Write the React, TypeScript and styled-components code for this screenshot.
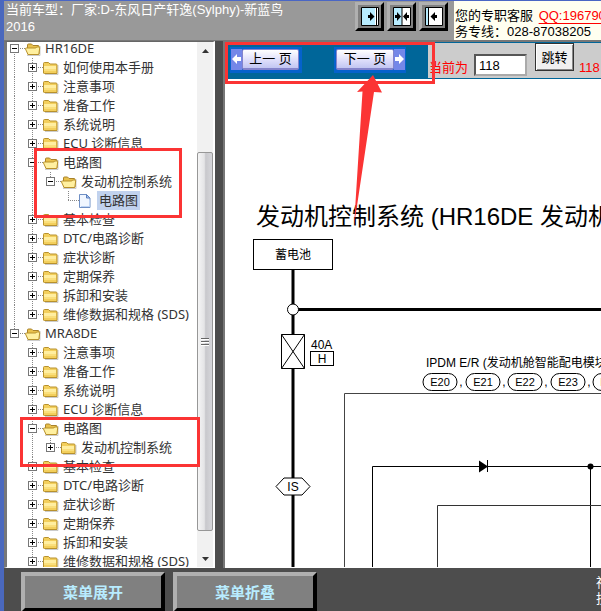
import React, { useState } from "react";
import styled, { createGlobalStyle, css } from "styled-components";

const GlobalStyle = createGlobalStyle`
  * { box-sizing: border-box; }
  body {
    margin: 0;
    overflow: hidden;
    font-family: "Liberation Sans", "Noto Sans CJK SC", sans-serif;
    font-size: 13px;
    line-height: 17px;
    color: #000;
  }
  button, input { font: inherit; padding: 0; margin: 0; }
  ul { list-style: none; margin: 0; padding: 0; }
`;

const Window = styled.div`
  position: relative;
  display: flex;
  flex-direction: column;
  height: 100vh;
  overflow: hidden;
  border-left: 4px solid #4a68bd;
  border-top: 1px solid #4a66c4;
  background: #4d4d4d;
`;

const Header = styled.header`
  display: flex;
  flex: 0 0 40px;
  padding-left: 2px;
  background: #999;
  border-bottom: 1px solid #777;
`;

const VehicleInfo = styled.p`
  flex: 0 0 280px;
  margin: 0;
  color: #fff;
`;

const LayoutButtons = styled.div`
  display: flex;
  flex: 1 0 auto;
  justify-content: flex-end;
  gap: 3px;
  padding: 1px 6px 0 0;
  min-width: 168px;
`;

const LayoutButton = styled.button`
  display: flex;
  align-items: center;
  justify-content: center;
  width: 29px;
  height: 29px;
  background: #808080;
  border: 3px solid;
  border-color: #b0b0b0 #000 #000 #b0b0b0;
`;

const Contact = styled.address`
  flex: 0 1 147px;
  min-width: 0;
  padding: 7px 0 0 1px;
  overflow: hidden;
  line-height: 16px;
  white-space: nowrap;
  font-style: normal;
  background: #fffff0;
`;

const QQLink = styled.a`
  margin-left: 2px;
  color: #f00;
  text-underline-offset: 3px;
`;

const Body = styled.div`
  display: flex;
  flex: 1 1 0;
  min-height: 0;
`;

const Sidebar = styled.nav`
  display: flex;
  flex: 0 0 211px;
  background: #fff;
  border: solid;
  border-width: 1px 2px 1px 3px;
  border-color: #666 #fff #fff #777;
`;

const TreeView = styled.div`
  flex: 1;
  min-width: 0;
  overflow: hidden;
  font-family: "Noto Sans", "Noto Sans CJK SC", sans-serif;
  color: #333;
`;

const TreeRoot = styled.ul`
  margin-top: -3px;
`;

const TreeRow = styled.div`
  display: flex;
  align-items: center;
  height: 19px;
  white-space: nowrap;
`;

const dots = "repeating-linear-gradient(to bottom, #888 0 1px, transparent 1px 2px)";
const dashes = "repeating-linear-gradient(to right, #888 0 1px, transparent 1px 2px)";

const Guide = styled.span<{ $line: boolean }>`
  flex: 0 0 18px;
  height: 19px;
  background: ${(p) => (p.$line ? dots : "none")} 7px 0 / 1px 100% no-repeat;
`;

const Joint = styled.span<{ $up: boolean; $down: boolean }>`
  display: flex;
  flex: 0 0 18px;
  align-items: center;
  height: 19px;
  padding-left: 3px;
  ${(p) => css`
    background:
      ${dashes} 7px 9px / 11px 1px no-repeat,
      ${p.$up ? dots : "none"} 7px 0 / 1px 9px no-repeat,
      ${p.$down ? dots : "none"} 7px 9px / 1px 10px no-repeat;
  `}
`;

const Expander = styled.button`
  width: 9px;
  height: 9px;
  border: 1px solid #777;
  background:
    linear-gradient(#000, #000) center / 5px 1px no-repeat,
    #fff;
  &[aria-expanded="false"] {
    background:
      linear-gradient(#000, #000) center / 5px 1px no-repeat,
      linear-gradient(#000, #000) center / 1px 5px no-repeat,
      #fff;
  }
`;

const TreeIcon = styled.svg`
  flex: 0 0 16px;
  height: 16px;
  margin-right: 3px;
`;

const TreeLabel = styled.span<{ $selected: boolean }>`
  padding: 0 1px;
  line-height: 19px;
  ${(p) => p.$selected && css`
    margin-left: -1px;
    padding: 0 2px;
    background: #c1d2ee;
  `}
`;

const Scrollbar = styled.div`
  display: flex;
  flex: 0 0 16px;
  flex-direction: column;
  background: #f1f1f1;
`;

const ScrollArrow = styled.button`
  display: flex;
  align-items: center;
  justify-content: center;
  height: 17px;
  border: 0;
  background: transparent;
`;

const Track = styled.div`
  display: grid;
  grid-template-rows: 93fr 379fr 19fr;
  flex: 1;
`;

const Thumb = styled.div`
  display: flex;
  flex-direction: column;
  align-items: center;
  justify-content: center;
  gap: 1px;
  grid-row: 2;
  border: 1px solid #979797;
  border-radius: 2px;
  background: linear-gradient(to right, #f5f5f5, #e4e4e6 45%, #c8c8cc 55%, #d6d6da);
`;

const Grip = styled.span`
  width: 8px;
  height: 2px;
  background: linear-gradient(#666 50%, #fff 50%);
`;

const Content = styled.main`
  display: flex;
  flex: 1;
  flex-direction: column;
  min-width: 0;
  margin-left: 8px;
  background: #fff;
  border-left: 2px solid #777;
  border-top: 1px solid #777;
`;

const Toolbar = styled.form`
  display: flex;
  flex: 0 0 37px;
  background: #ccc;
  border: solid #069;
  border-width: 1px 0;
`;

const Pager = styled.div`
  display: flex;
  flex: 0 0 203px;
  gap: 32px;
  padding: 4px 0 0 5px;
  background: #069;
`;

const PagerButton = styled.button<{ $next?: boolean }>`
  display: flex;
  flex: 0 0 72px;
  flex-direction: ${(p) => (p.$next ? "row-reverse" : "row")};
  height: 26px;
  padding: ${(p) => (p.$next ? "2px 1px 3px 2px" : "2px 3px 3px 1px")};
  border: 0;
  background: #0562cc;
`;

const PagerFace = styled.span`
  flex: 1;
  font-size: 13px;
  line-height: 18px;
  text-align: center;
  background: linear-gradient(#fff, #dcdcfa 60%, #c2c6f2);
  border: 1px solid #8484cc;
  border-width: 1px 1px 2px;
  border-radius: 2px;
`;

const PagerArrow = styled.svg`
  flex: 0 0 11px;
  height: 21px;
`;

const PageField = styled.div`
  display: flex;
  align-items: flex-start;
  flex: 1;
  min-width: 0;
  overflow: hidden;
  padding-left: 1px;
  color: #f00;
  white-space: nowrap;
`;

const PageLabel = styled.label`
  margin: 16px 6px 0 0;
`;

const PageInput = styled.input`
  flex: none;
  width: 53px;
  height: 22px;
  margin: 11px 8px 0 0;
  padding-left: 3px;
  border: 2px inset #aaa;
  background: #fff;
  color: #000;
`;

const JumpButton = styled.button`
  flex: 0 0 39px;
  height: 28px;
  margin-right: 5px;
  border: 1px solid #333;
  box-shadow: inset 1px 1px #fff, inset -1px -1px #888;
  background: #f0f0f0;
  color: #000;
`;

const PageTotal = styled.output`
  margin-top: 16px;
`;

const Sheet = styled.div`
  flex: 1;
  min-height: 0;
  overflow: hidden;
  border-bottom: 1px solid #fff;
`;

const Footer = styled.footer`
  display: flex;
  flex: 0 0 43px;
  gap: 8px;
  padding: 4px 0 0 17px;
  overflow: hidden;
`;

const MenuButton = styled.button`
  flex: 0 0 144px;
  height: 40px;
  border: 4px solid;
  border-color: #b0b0b0 #000 #000 #b0b0b0;
  background: #808080;
  color: #b8ecff;
  font-size: 15px;
  font-weight: 700;
`;

const Notice = styled.p`
  flex: 0 0 5px;
  margin: 3px 0 0 auto;
  overflow: hidden;
  color: #fff;
  line-height: 16px;
  white-space: nowrap;
`;

const Markup = styled.svg`
  position: absolute;
  left: -4px;
  top: -1px;
  pointer-events: none;
`;

type Node = { label: string; open?: boolean; leaf?: boolean; children?: Node[] };

const folder = (label: string): Node => ({ label, open: false });

const tree: Node[] = [
  {
    label: "HR16DE",
    open: true,
    children: [
      folder("如何使用本手册"),
      folder("注意事项"),
      folder("准备工作"),
      folder("系统说明"),
      folder("ECU 诊断信息"),
      {
        label: "电路图",
        open: true,
        children: [
          { label: "发动机控制系统", open: true, children: [{ label: "电路图", leaf: true }] },
        ],
      },
      folder("基本检查"),
      folder("DTC/电路诊断"),
      folder("症状诊断"),
      folder("定期保养"),
      folder("拆卸和安装"),
      folder("维修数据和规格 (SDS)"),
    ],
  },
  {
    label: "MRA8DE",
    open: true,
    children: [
      folder("注意事项"),
      folder("准备工作"),
      folder("系统说明"),
      folder("ECU 诊断信息"),
      { label: "电路图", open: true, children: [folder("发动机控制系统")] },
      folder("基本检查"),
      folder("DTC/电路诊断"),
      folder("症状诊断"),
      folder("定期保养"),
      folder("拆卸和安装"),
      folder("维修数据和规格 (SDS)"),
    ],
  },
];

function FolderIcon({ open }: { open: boolean }) {
  return (
    <TreeIcon width="16" height="16" viewBox="0 0 16 16" aria-hidden="true">
      <path d="M2 14.5h13V5" fill="none" stroke="#aaa" opacity=".6" />
      {open ? (
        <>
          <path d="M2.5 13V4q0-1 1-1h3l1.500 1.500H13q1 0 1 1V13z" fill="#e9c14c" stroke="#a9822a" />
          <path d="M3 13.500.5 8q-.2-1 .8-1h9.500l.8-1H14q.8 0 .7 1l-.9 6.500z" fill="#fff0a0" stroke="#b8912c" />
        </>
      ) : (
        <>
          <path d="M.5 13V3.500q0-1 1-1h4l1.500 1.500h6q1 0 1 1v8.500h-12.500q-1 0-1-.5z" fill="#f3cf5c" stroke="#b8912c" />
          <path d="M1 6h12v3H1z" fill="#ffeea0" />
          <path d="M1 9h12v2H1z" fill="#fadf7c" />
        </>
      )}
    </TreeIcon>
  );
}

function FileIcon() {
  return (
    <TreeIcon width="16" height="16" viewBox="0 0 16 16" aria-hidden="true">
      <path d="M.5 1.500h7l3.500 3.500v9.500H.5z" fill="#f0f6ff" stroke="#6f8fc4" />
      <path d="M7.500 1.500V5H11z" fill="#a9c4ee" stroke="#5a7fbe" />
      <path d="M2 13.500h8.500V7" fill="none" stroke="#bcd3f5" />
    </TreeIcon>
  );
}

type BranchProps = { node: Node; guides: boolean[]; last: boolean; first: boolean };

function Branch({ node, guides, last, first }: BranchProps) {
  const [open, setOpen] = useState(Boolean(node.open));
  return (
    <li role="treeitem" aria-expanded={node.leaf ? undefined : open} aria-selected={Boolean(node.leaf)}>
      <TreeRow>
        {guides.map((line, i) => (
          <Guide key={i} $line={line} />
        ))}
        <Joint $up={!first} $down={!last}>
          {!node.leaf && (
            <Expander type="button" aria-label={node.label} aria-expanded={open} onClick={() => setOpen(!open)} />
          )}
        </Joint>
        {node.leaf ? <FileIcon /> : <FolderIcon open={open} />}
        <TreeLabel $selected={Boolean(node.leaf)}>{node.label}</TreeLabel>
      </TreeRow>
      {open && node.children && (
        <ul role="group">
          {node.children.map((child, i) => (
            <Branch
              key={child.label}
              node={child}
              guides={[...guides, !last]}
              first={false}
              last={i === node.children!.length - 1}
            />
          ))}
        </ul>
      )}
    </li>
  );
}

function WiringDiagram() {
  return (
    <svg width="900" height="700" viewBox="0 0 900 700" role="img" aria-label="发动机控制系统电路图">
      <g fontFamily='"Liberation Sans", "Noto Sans CJK SC", sans-serif' fontSize="12" fill="#000">
        <text x="31" y="146" fontSize="24">发动机控制系统 (HR16DE 发动机)</text>
        <g fill="none" stroke="#000">
          <path d="M68 190V700M68 230.500H900" strokeWidth="3" />
          <path d="M119.500 700V314.500H900" stroke="#444" />
          <path d="M147.500 700V387.500H900M365.500 387V700M262.500 381v12" />
          <path d="M212.500 700V426.500H900" stroke="#333" />
        </g>
        <g fill="#fff" stroke="#000">
          <rect x="28.500" y="160.500" width="79" height="30" />
          <circle cx="68" cy="230.500" r="5.500" />
          <path d="M56.500 255.500h23v34h-23zl23 34m0-34-23 34" />
          <rect x="85.500" y="272.500" width="23" height="14" />
          <path d="M51 407.500 59 399h18l8 8.500-8 8.500H59z" />
          {[0, 1, 2, 3, 4].map((i) => (
            <rect key={i} x={198 + i * 43 - Math.floor(i / 2)} y="294.500" width="34" height="17" rx="8.500" />
          ))}
        </g>
        <path d="M254 381.500v12l9-6z" />
        <circle cx="365.500" cy="387.500" r="3" />
        <g textAnchor="middle">
          <text x="68" y="180">蓄电池</text>
          <text x="97" y="284">H</text>
          <text x="68" y="412">IS</text>
          {["E20", "E21", "E22", "E23", "E24"].map((id, i) => (
            <text key={id} x={215 + i * 43 - Math.floor(i / 2)} y="307" fontSize="11">{id}</text>
          ))}
          {[0, 1, 2, 3].map((i) => (
            <text key={i} x={236 + i * 43 - Math.floor(i / 2)} y="307">,</text>
          ))}
        </g>
        <text x="86" y="270">40A</text>
        <text x="201" y="288">IPDM E/R (发动机舱智能配电模块)</text>
      </g>
    </svg>
  );
}

export default function App() {
  const [page, setPage] = useState("118");
  const step = (n: number) => setPage(String(Math.max(1, Number(page) + n)));
  return (
    <>
      <GlobalStyle />
      <Window>
        <Header>
          <VehicleInfo>当前车型：厂家:D-东风日产轩逸(Sylphy)-新蓝鸟 2016</VehicleInfo>
          <LayoutButtons>
            <LayoutButton type="button" aria-label="展开左栏">
              <svg width="18" height="19" viewBox="0 0 18 19">
                <path d="M.5.5h17v18H.5z" fill="#fff" stroke="#000" />
                <path d="M1 1h13v17H1z" fill="#b8ecff" />
                <path d="M15.500 1v17" stroke="#000" />
                <path d="M7 8h2V5l4.500 4.500L9 14v-3H7z" />
              </svg>
            </LayoutButton>
            <LayoutButton type="button" aria-label="平分">
              <svg width="18" height="19" viewBox="0 0 18 19">
                <path d="M.5.5h17v18H.5z" fill="#fff" stroke="#000" />
                <path d="M1 1h8v17H1z" fill="#b8ecff" />
                <path d="M9 1v17" stroke="#000" />
                <path d="M2 8h2V5l4 4.500L4 14v-3H2zM16 8h-2V5l-4 4.500 4 4.500v-3h2z" />
              </svg>
            </LayoutButton>
            <LayoutButton type="button" aria-label="收起左栏">
              <svg width="18" height="19" viewBox="0 0 18 19">
                <path d="M.5.5h17v18H.5z" fill="#fff" stroke="#000" />
                <path d="M1 1h2v17H1z" fill="#b8ecff" />
                <path d="M3.500 1v17" stroke="#000" />
                <path d="M12 8h-2V5L5.500 9.500 10 14v-3h2z" />
              </svg>
            </LayoutButton>
          </LayoutButtons>
          <Contact>
            您的专职客服 <QQLink href="#qq">QQ:196790</QQLink>
            <br />
            务专线：028-87038205
          </Contact>
        </Header>
        <Body>
          <Sidebar aria-label="手册目录">
            <TreeView>
              <TreeRoot role="tree">
                {tree.map((node, i) => (
                  <Branch key={node.label} node={node} guides={[]} first={i === 0} last={i === tree.length - 1} />
                ))}
              </TreeRoot>
            </TreeView>
            <Scrollbar>
              <ScrollArrow type="button" aria-label="向上滚动">
                <svg width="7" height="4" viewBox="0 0 7 4"><path d="M0 4h7L3.500 0z" fill="#333" /></svg>
              </ScrollArrow>
              <Track>
                <Thumb><Grip /><Grip /><Grip /></Thumb>
              </Track>
              <ScrollArrow type="button" aria-label="向下滚动">
                <svg width="7" height="4" viewBox="0 0 7 4"><path d="M0 0h7L3.500 4z" fill="#333" /></svg>
              </ScrollArrow>
            </Scrollbar>
          </Sidebar>
          <Content>
            <Toolbar onSubmit={(e) => e.preventDefault()}>
              <Pager>
                <PagerButton type="button" onClick={() => step(-1)}>
                  <PagerArrow width="11" height="21" viewBox="0 0 11 21" aria-hidden="true">
                    <path d="M0 0h11v21H0z" fill="#7487e8" />
                    <path d="M1 10l5-5v3h4v4H6v3z" fill="#fff" />
                  </PagerArrow>
                  <PagerFace>上一 页</PagerFace>
                </PagerButton>
                <PagerButton type="button" $next onClick={() => step(1)}>
                  <PagerArrow width="11" height="21" viewBox="0 0 11 21" aria-hidden="true">
                    <path d="M0 0h11v21H0z" fill="#7487e8" />
                    <path d="M10 10l-5-5v3H1v4h4v3z" fill="#fff" />
                  </PagerArrow>
                  <PagerFace>下一 页</PagerFace>
                </PagerButton>
              </Pager>
              <PageField>
                <PageLabel htmlFor="page">当前为</PageLabel>
                <PageInput id="page" value={page} onChange={(e) => setPage(e.target.value)} />
                <JumpButton type="submit">跳转</JumpButton>
                <PageTotal>118</PageTotal>
              </PageField>
            </Toolbar>
            <Sheet>
              <WiringDiagram />
            </Sheet>
          </Content>
        </Body>
        <Footer>
          <MenuButton type="button">菜单展开</MenuButton>
          <MenuButton type="button">菜单折叠</MenuButton>
          <Notice>神<br />技</Notice>
        </Footer>
        <Markup width="601" height="611" viewBox="0 0 601 611" aria-hidden="true">
          <g fill="none" stroke="#fb3434" strokeWidth="3">
            <path d="M35.500 149.500h145v67h-145zM21.500 418.500h177v47h-177zM226.500 43.500h207v39h-207z" />
          </g>
          <path d="M354 226 362.500 91.500 357 92 373 75 382 92.500 374 92z" fill="#fb3434" />
        </Markup>
      </Window>
    </>
  );
}
